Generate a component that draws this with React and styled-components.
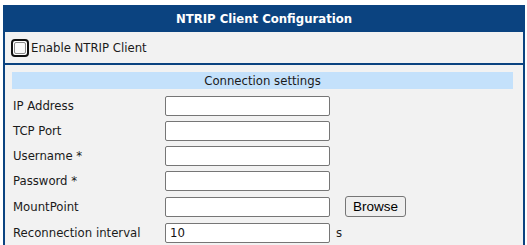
import React from "react";
import styled, { createGlobalStyle } from "styled-components";

const Global = createGlobalStyle`
  html, body { margin: 0; padding: 0; background: #ffffff; }
  body { font-family: "DejaVu Sans Condensed", "DejaVu Sans", sans-serif; font-size: 13px; color: #1a1a1a; }
`;

const Panel = styled.div`
  margin: 5px 0 0 3px;
  width: 522px;
  box-sizing: border-box;
  border: 2px solid #0b4380;
  border-top: none;
  border-bottom: none;
  background: #f2f2f2;
`;

const Header = styled.div`
  height: 27px;
  margin: 0 -2px;
  background: #0b4380;
  color: #ffffff;
  font-weight: bold;
  font-size: 13px;
  display: flex;
  align-items: center;
  justify-content: center;
`;

const EnableRow = styled.label`
  display: flex;
  align-items: center;
  padding-left: 6px;
  gap: 2px;
  border-bottom: 2px solid #0b4380;
  box-sizing: border-box;
  height: 33px;
`;

const Check = styled.span`
  width: 18px;
  height: 18px;
  box-sizing: border-box;
  border: 2px solid #111;
  border-radius: 4px;
  background: #fff;
  display: inline-flex;
  align-items: center;
  justify-content: center;
  &::after {
    content: "";
    width: 12px;
    height: 12px;
    box-sizing: border-box;
    border: 1px solid #8a8a8a;
    border-radius: 2px;
    background: #fbfbfb;
  }
`;

const Section = styled.div`
  padding: 7px 10px 0 7px;
`;

const SectionTitle = styled.div`
  height: 17px;
  background: #c4e1fb;
  display: flex;
  align-items: center;
  justify-content: center;
  margin-bottom: 4px;
`;

const Row = styled.div`
  display: grid;
  grid-template-columns: 152px 165px auto;
  align-items: center;
  height: ${(p) => (p.$tall ? 27 : 25)}px;
  padding-left: 1px;
`;

const Label = styled.span``;

const Input = styled.input`
  width: 165px;
  height: 20px;
  box-sizing: border-box;
  border: 1px solid #767676;
  border-radius: 2px;
  background: #fff;
  padding: 0 4px;
  font-family: "DejaVu Sans Condensed", "DejaVu Sans", sans-serif;
  font-size: 13px;
  color: #111;
  margin: 0;
  outline: none;
`;

const Browse = styled.button`
  margin-left: 15px;
  width: 61px;
  height: 21px;
  box-sizing: border-box;
  border: 1px solid #767676;
  border-radius: 3px;
  background: #efefef;
  font-family: "Liberation Sans", Arial, sans-serif;
  font-size: 13.5px;
  color: #000;
  padding: 0;
`;

const Unit = styled.span`
  margin-left: 6px;
`;

const fields = [
  { label: "IP Address" },
  { label: "TCP Port" },
  { label: "Username *" },
  { label: "Password *" },
  { label: "MountPoint", browse: true },
  { label: "Reconnection interval", value: "10", unit: "s" },
];

export default function App() {
  return (
    <>
      <Global />
      <Panel>
        <Header>NTRIP Client Configuration</Header>
        <EnableRow>
          <Check />
          <span>Enable NTRIP Client</span>
        </EnableRow>
        <Section>
          <SectionTitle>Connection settings</SectionTitle>
          {fields.map((f) => (
            <Row key={f.label} $tall={f.browse}>
              <Label>{f.label}</Label>
              <Input defaultValue={f.value || ""} />
              <div>
                {f.browse && <Browse>Browse</Browse>}
                {f.unit && <Unit>{f.unit}</Unit>}
              </div>
            </Row>
          ))}
        </Section>
      </Panel>
    </>
  );
}
